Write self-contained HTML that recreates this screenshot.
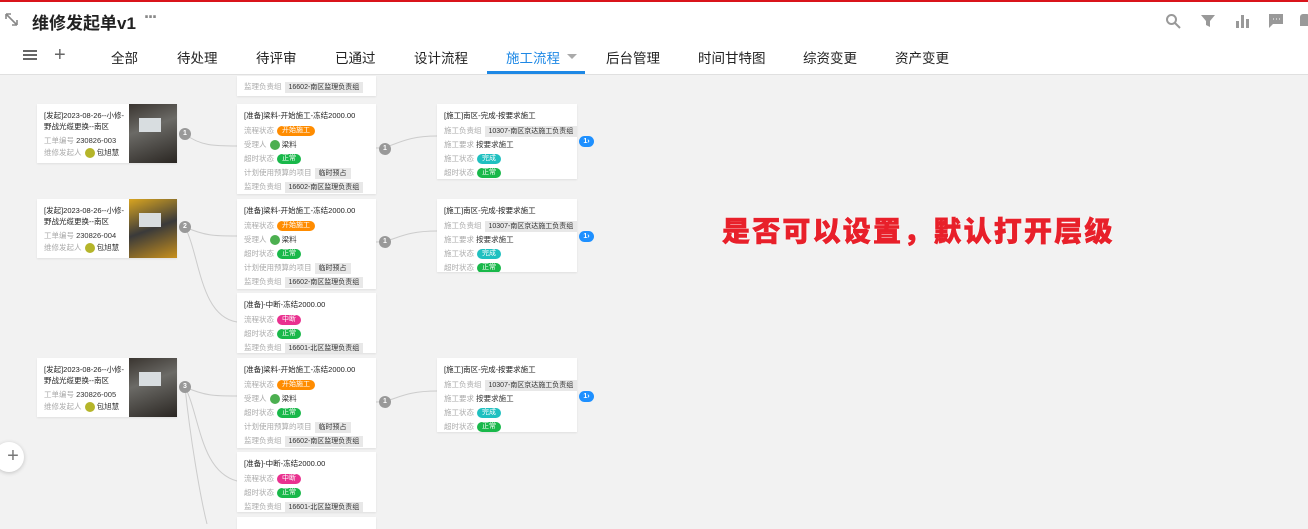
<!DOCTYPE html>
<html><head><meta charset="utf-8"><style>
*{margin:0;padding:0;box-sizing:border-box}
body{width:1308px;height:524px;overflow:hidden;background:#f2f2f2;font-family:"Liberation Sans","Noto Sans CJK SC",sans-serif;position:relative;color:#333}
.hdr{position:absolute;left:0;top:0;width:1308px;height:75px;background:#fff;border-top:2px solid #d9141b;border-bottom:1px solid #e0e0e0}
.a{position:absolute}
.tab{position:absolute;top:47px;font-size:13.5px;color:#222}
.card{position:absolute;background:#fff;box-shadow:0 1px 2px rgba(0,0,0,.08);font-size:7.5px;color:#333;padding:6px 7px;overflow:hidden}
.t{font-size:7.5px;color:#222;line-height:11px;margin-bottom:3px}
.r{height:14px;line-height:14px;white-space:nowrap;color:#aaa}
.r b{font-weight:normal;color:#333}
.tag{display:inline-block;height:10px;line-height:10px;padding:0 5px;border-radius:5px;color:#fff;font-size:7px;vertical-align:middle;margin-left:3px}
.or{background:#ff8c00}.gr{background:#19b84a}.cy{background:#1fc0c0}.pk{background:#e9318f}
.gy{display:inline-block;background:#e8e8e8;color:#333;padding:0 4px;height:11px;line-height:11px;margin-left:3px;font-size:7px}
.av{display:inline-block;width:10px;height:10px;border-radius:5px;vertical-align:middle;margin-left:3px}
.img{position:absolute;right:0;top:0;width:48px;height:59px;background:linear-gradient(160deg,#3a3530,#6b6a66 40%,#2a2622)}
.img i{position:absolute;left:10px;top:14px;width:22px;height:14px;background:#d8dde0}
.b{position:absolute;width:12px;height:12px;border-radius:6px;background:#999;color:#fff;font-size:7px;text-align:center;line-height:12px;font-weight:bold}
.bl{position:absolute;width:15px;height:11px;border-radius:6px;background:#1e90ff;color:#fff;font-size:7px;text-align:center;line-height:11px;font-weight:bold}
</style></head><body>
<div class="hdr"></div>
<svg class="a" style="left:4px;top:12px" width="16" height="16" viewBox="0 0 16 16"><path d="M2 2l11 11M2 2v5M2 2h5M13 13v-5M13 13h-5" stroke="#888" stroke-width="1.6" fill="none"/></svg>
<div class="a" style="left:32px;top:9px;font-size:17px;font-weight:bold;color:#222">维修发起单v1</div>
<div class="a" style="left:144px;top:7px;font-size:18px;color:#888;letter-spacing:-2px;font-weight:bold">···</div>
<svg class="a" style="left:1165px;top:13px" width="16" height="16"><circle cx="6.5" cy="6.5" r="4.5" stroke="#999" stroke-width="2" fill="none"/><path d="M10 10l5 5" stroke="#999" stroke-width="2"/></svg>
<svg class="a" style="left:1200px;top:14px" width="16" height="14"><path d="M1 1h14l-5 6v6l-4-2v-4z" fill="#999"/></svg>
<svg class="a" style="left:1234px;top:13px" width="16" height="16"><rect x="2" y="8" width="3" height="7" fill="#999"/><rect x="7" y="2" width="3" height="13" fill="#999"/><rect x="12" y="6" width="3" height="9" fill="#999"/></svg>
<svg class="a" style="left:1268px;top:13px" width="16" height="16"><path d="M1 1h14v10H5l-4 4z" fill="#999"/><path d="M5 6h1M8 6h1M11 6h1" stroke="#fff"/></svg>
<div class="a" style="left:1300px;top:14px;width:10px;height:12px;background:#999;border-radius:3px 3px 0 0"></div>
<div class="a" style="left:23px;top:50px;width:14px;height:2px;background:#666;box-shadow:0 4px 0 #666,0 8px 0 #666"></div>
<div class="a" style="left:54px;top:44px;font-size:20px;color:#666">+</div>
<div class="tab" style="left:111px">全部</div>
<div class="tab" style="left:177px">待处理</div>
<div class="tab" style="left:256px">待评审</div>
<div class="tab" style="left:335px">已通过</div>
<div class="tab" style="left:414px">设计流程</div>
<div class="tab" style="left:506px;color:#1e88e5">施工流程</div>
<div class="a" style="left:567px;top:54px;border:5px solid transparent;border-top-color:#aaa"></div>
<div class="a" style="left:487px;top:71px;width:98px;height:3px;background:#1e88e5"></div>
<div class="tab" style="left:606px">后台管理</div>
<div class="tab" style="left:698px">时间甘特图</div>
<div class="tab" style="left:803px">综资变更</div>
<div class="tab" style="left:895px">资产变更</div>

<svg class="a" style="left:0;top:76px" width="600" height="448" fill="none" stroke="#ccc" stroke-width="1">
<path d="M185 58 C200 70 215 70 237 70"/>
<path d="M185 151 C205 160 215 160 237 160"/>
<path d="M185 151 C200 180 200 240 237 246"/>
<path d="M185 311 C205 320 215 320 237 320"/>
<path d="M185 311 C200 340 200 395 237 405"/>
<path d="M185 311 C190 360 200 420 207 448"/>
<path d="M376 72 C395 72 400 60 437 60"/>
<path d="M376 166 C395 166 400 155 437 155"/>
<path d="M376 326 C395 326 400 315 437 315"/>
</svg>

<div class="card" style="left:37px;top:104px;width:140px;height:59px"><div class="t" style="width:84px">[发起]2023-08-26--小修-野战光缆更换--南区</div><div class="r" style="height:12px;line-height:12px">工单编号 <b>230826-003</b></div><div class="r" style="height:12px;line-height:12px">维修发起人<span class="av" style="background:#b5b52a"></span> <b>包旭慧</b></div><div class="img"><i></i></div></div>
<div class="card" style="left:37px;top:199px;width:140px;height:59px"><div class="t" style="width:84px">[发起]2023-08-26--小修-野战光缆更换--南区</div><div class="r" style="height:12px;line-height:12px">工单编号 <b>230826-004</b></div><div class="r" style="height:12px;line-height:12px">维修发起人<span class="av" style="background:#b5b52a"></span> <b>包旭慧</b></div><div class="img" style="background:linear-gradient(160deg,#d9a520,#3a3a3a 50%,#c8901c)"><i></i></div></div>
<div class="card" style="left:37px;top:358px;width:140px;height:59px"><div class="t" style="width:84px">[发起]2023-08-26--小修-野战光缆更换--南区</div><div class="r" style="height:12px;line-height:12px">工单编号 <b>230826-005</b></div><div class="r" style="height:12px;line-height:12px">维修发起人<span class="av" style="background:#b5b52a"></span> <b>包旭慧</b></div><div class="img"><i></i></div></div>

<div class="card" style="left:237px;top:76px;width:139px;height:20px;padding-top:4px"><div class="r">监理负责组<span class="gy">16602-南区监理负责组</span></div></div>
<div class="card" style="left:237px;top:104px;width:139px;height:90px"><div class="t">[准备]梁料-开始施工-冻结2000.00</div><div class="r">流程状态<span class="tag or">开始施工</span></div><div class="r">受理人<span class="av" style="background:#4caf50"></span> <b>梁料</b></div><div class="r">超时状态<span class="tag gr">正常</span></div><div class="r">计划使用预算的项目<span class="gy">临时预占</span></div><div class="r">监理负责组<span class="gy">16602-南区监理负责组</span></div></div>
<div class="card" style="left:237px;top:199px;width:139px;height:90px"><div class="t">[准备]梁料-开始施工-冻结2000.00</div><div class="r">流程状态<span class="tag or">开始施工</span></div><div class="r">受理人<span class="av" style="background:#4caf50"></span> <b>梁料</b></div><div class="r">超时状态<span class="tag gr">正常</span></div><div class="r">计划使用预算的项目<span class="gy">临时预占</span></div><div class="r">监理负责组<span class="gy">16602-南区监理负责组</span></div></div>
<div class="card" style="left:237px;top:293px;width:139px;height:60px"><div class="t">[准备]-中断-冻结2000.00</div><div class="r">流程状态<span class="tag pk">中断</span></div><div class="r">超时状态<span class="tag gr">正常</span></div><div class="r">监理负责组<span class="gy">16601-北区监理负责组</span></div></div>
<div class="card" style="left:237px;top:358px;width:139px;height:90px"><div class="t">[准备]梁料-开始施工-冻结2000.00</div><div class="r">流程状态<span class="tag or">开始施工</span></div><div class="r">受理人<span class="av" style="background:#4caf50"></span> <b>梁料</b></div><div class="r">超时状态<span class="tag gr">正常</span></div><div class="r">计划使用预算的项目<span class="gy">临时预占</span></div><div class="r">监理负责组<span class="gy">16602-南区监理负责组</span></div></div>
<div class="card" style="left:237px;top:452px;width:139px;height:60px"><div class="t">[准备]-中断-冻结2000.00</div><div class="r">流程状态<span class="tag pk">中断</span></div><div class="r">超时状态<span class="tag gr">正常</span></div><div class="r">监理负责组<span class="gy">16601-北区监理负责组</span></div></div>
<div class="card" style="left:237px;top:517px;width:139px;height:10px"></div>

<div class="card" style="left:437px;top:104px;width:140px;height:75px"><div class="t">[施工]南区-完成-按要求施工</div><div class="r">施工负责组<span class="gy">10307-南区京达施工负责组</span></div><div class="r">施工要求 <b>按要求施工</b></div><div class="r">施工状态<span class="tag cy">完成</span></div><div class="r">超时状态<span class="tag gr">正常</span></div></div>
<div class="card" style="left:437px;top:199px;width:140px;height:73px"><div class="t">[施工]南区-完成-按要求施工</div><div class="r">施工负责组<span class="gy">10307-南区京达施工负责组</span></div><div class="r">施工要求 <b>按要求施工</b></div><div class="r">施工状态<span class="tag cy">完成</span></div><div class="r">超时状态<span class="tag gr">正常</span></div></div>
<div class="card" style="left:437px;top:358px;width:140px;height:74px"><div class="t">[施工]南区-完成-按要求施工</div><div class="r">施工负责组<span class="gy">10307-南区京达施工负责组</span></div><div class="r">施工要求 <b>按要求施工</b></div><div class="r">施工状态<span class="tag cy">完成</span></div><div class="r">超时状态<span class="tag gr">正常</span></div></div>

<div class="b" style="left:179px;top:128px">1</div>
<div class="b" style="left:179px;top:221px">2</div>
<div class="b" style="left:179px;top:381px">3</div>
<div class="b" style="left:379px;top:143px">1</div>
<div class="b" style="left:379px;top:236px">1</div>
<div class="b" style="left:379px;top:396px">1</div>
<div class="bl" style="left:579px;top:136px">1›</div>
<div class="bl" style="left:579px;top:231px">1›</div>
<div class="bl" style="left:579px;top:391px">1›</div>

<div class="a" style="left:-6px;top:442px;width:30px;height:30px;border-radius:15px;background:#fff;box-shadow:0 1px 4px rgba(0,0,0,.2);text-align:center;line-height:28px;font-size:20px;color:#777;padding-left:8px">+</div>

<div class="a" style="left:722px;top:210px;font-size:28px;font-weight:900;color:#e8202a;letter-spacing:2.2px;-webkit-text-stroke:0.6px #e8202a;text-shadow:0 0 2px #fff,0 0 2px #fff">是否可以设置，默认打开层级</div>
</body></html>
